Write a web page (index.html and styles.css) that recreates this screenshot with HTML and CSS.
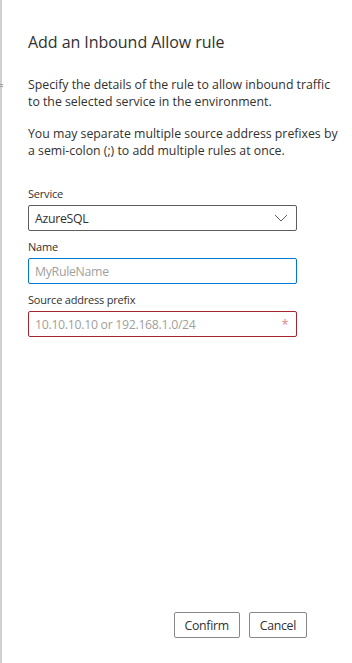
FILE: index.html
```html
<!DOCTYPE html>
<html lang="en">
<head>
  <meta charset="UTF-8">
  <meta name="viewport" content="width=device-width, initial-scale=1.0">
  <title>Add an Inbound Allow rule</title>
  <link rel="stylesheet" href="styles.css">
</head>
<body>
  <!-- Side panel -->
  <div class="panel">
    <span class="panel-grip"></span>
    <div class="panel-body">
      <h1 class="panel-title">Add an Inbound Allow rule</h1>
      <p class="panel-text">Specify the details of the rule to allow inbound traffic to the selected service in the environment.</p>
      <p class="panel-text">You may separate multiple source address prefixes by a semi-colon (;) to add multiple rules at once.</p>

      <form class="rule-form">
        <div class="field">
          <label class="field-label">Service</label>
          <div class="field-box field-select">
            <span>AzureSQL</span>
            <svg class="chevron" width="14" height="8" viewBox="0 0 14 8"><path d="M1 1l6 6 6-6" fill="none" stroke="#605e5c" stroke-width="1"/></svg>
          </div>
        </div>
        <div class="field">
          <label class="field-label">Name</label>
          <div class="field-box field-focus">
            <span class="placeholder">MyRuleName</span>
          </div>
        </div>
        <div class="field">
          <label class="field-label">Source address prefix</label>
          <div class="field-box field-error">
            <span class="placeholder">10.10.10.10 or 192.168.1.0/24</span>
            <span class="required">*</span>
          </div>
        </div>
      </form>
    </div>

    <div class="panel-footer">
      <button class="btn">Confirm</button>
      <button class="btn">Cancel</button>
    </div>
  </div>
</body>
</html>
```

FILE: styles.css
```css
body {
  font-family: "Open Sans", Arial, sans-serif;
  background-color: #fff;
  color: #323130;
  margin: 0;
  padding: 0;
}

/* Panel */
.panel {
  position: relative;
  display: flex;
  flex-direction: column;
  height: 663px;
  box-sizing: border-box;
  border-left: 2px solid #d2d0ce;
}
.panel-grip {
  position: absolute;
  left: -2px;
  top: 84px;
  width: 3px;
  height: 3px;
  border-top: 1px solid #a19f9d;
  border-bottom: 1px solid #a19f9d;
  box-sizing: border-box;
}
.panel-body {
  flex: 1;
  padding: 31px 14px 0 26px;
}
.panel-title {
  font-size: 16px;
  font-weight: 400;
  margin: 0 0 23px;
  line-height: 22px;
  letter-spacing: -0.05px;
}
.panel-text {
  font-size: 12.3px;
  line-height: 17px;
  margin: 0 0 15px;
}

/* Form */
.rule-form {
  margin-top: 28px;
  width: 269px;
}
.field {
  margin-bottom: 9px;
}
.field-label {
  display: block;
  font-size: 11px;
  line-height: 14px;
  margin-bottom: 4px;
  letter-spacing: -0.2px;
}
.field-box {
  display: flex;
  align-items: center;
  justify-content: space-between;
  height: 26px;
  box-sizing: border-box;
  padding: 0 8px 0 6px;
  border: 1px solid #605e5c;
  border-radius: 2px;
  font-size: 12.3px;
  letter-spacing: -0.3px;
}
.field-focus {
  border-color: #0078d4;
}
.field-error {
  border-color: #a4262c;
}
.placeholder {
  color: #a19f9d;
}
.required {
  color: #e37d80;
  font-size: 12px;
}

/* Footer */
.panel-footer {
  display: flex;
  justify-content: flex-end;
  gap: 9px;
  padding: 0 45px 25px 0;
}
.btn {
  font-family: inherit;
  font-size: 12.3px;
  letter-spacing: -0.3px;
  color: #323130;
  background-color: #fff;
  border: 1px solid #8a8886;
  border-radius: 2px;
  height: 26px;
  padding: 0 10px;
  cursor: pointer;
}
```
